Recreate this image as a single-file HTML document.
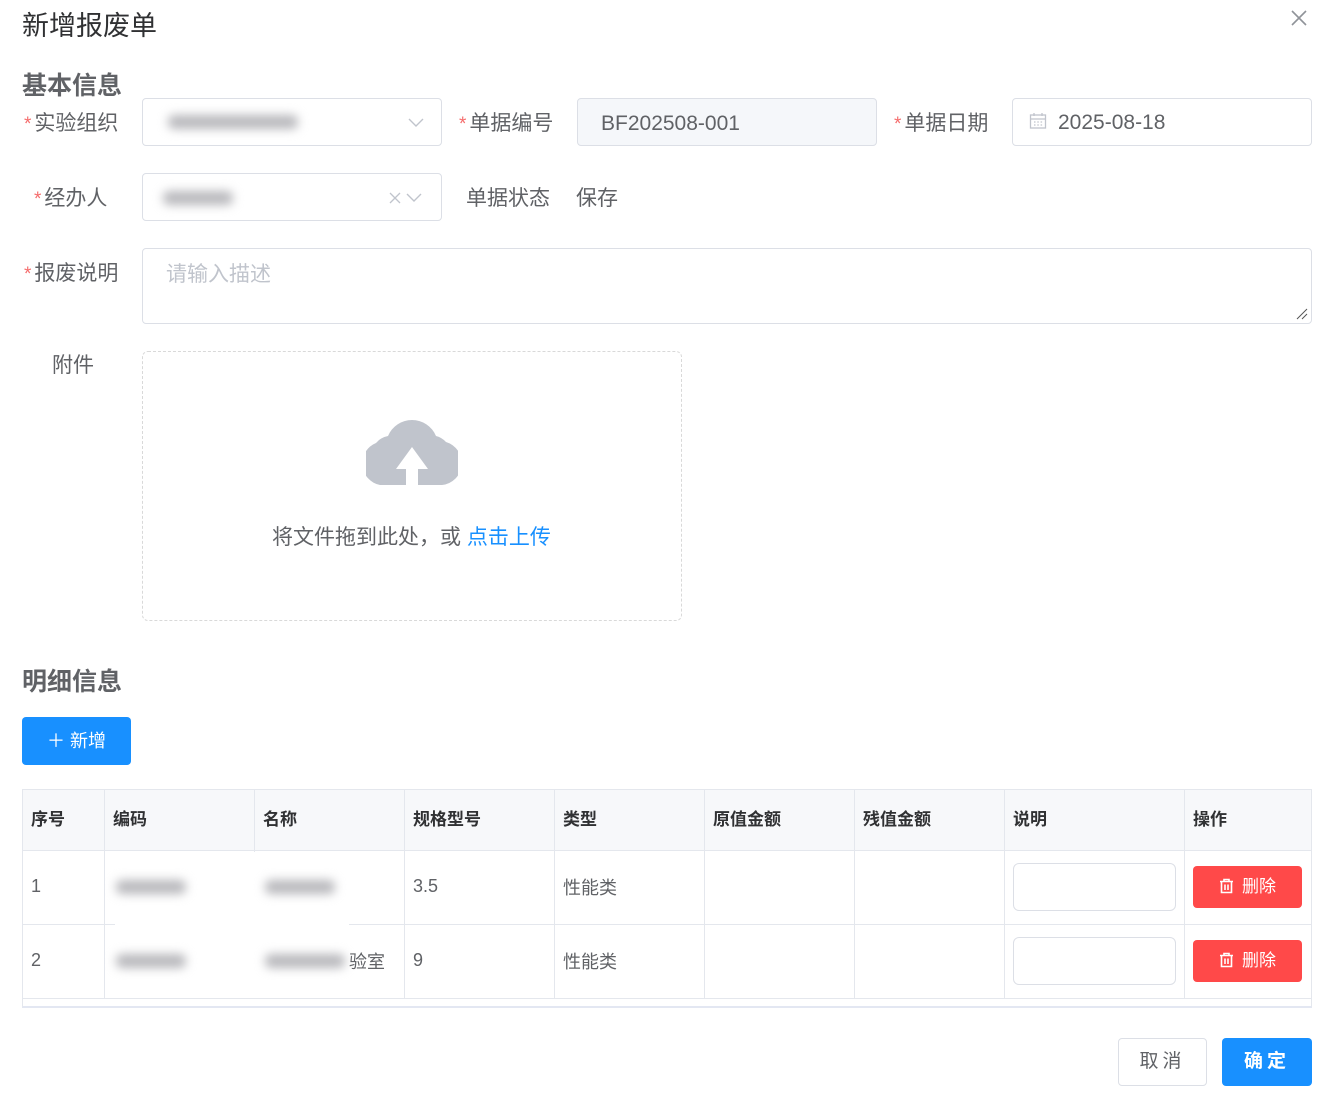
<!DOCTYPE html>
<html><head><meta charset="utf-8"><style>
*{box-sizing:border-box;margin:0;padding:0}
body{width:1330px;height:1112px;background:#fff;font-family:"Liberation Sans","Noto Sans CJK SC",sans-serif;color:#606266;position:relative;overflow:hidden}
.a{position:absolute}
.lbl{font-size:21px;color:#606266;white-space:nowrap}
.st{color:#f56c6c;font-size:19px;margin-right:3px}
.box{position:absolute;border:1px solid #dcdfe6;border-radius:4px;background:#fff}
.blur{position:absolute;background:#b8b8bc;filter:blur(5px);height:14px;border-radius:6px}
.th{position:absolute;top:0;height:60px;line-height:60px;font-weight:bold;font-size:17px;color:#303133;padding-left:8px}
.cell{position:absolute;font-size:18px;color:#606266;padding-left:8px}
.vl{position:absolute;width:1px;background:#e4e7ed}
.hl{position:absolute;height:1px;background:#e4e7ed;left:0;width:1289px}
.del{position:absolute;left:1193px;width:109px;height:42px;background:#ff4949;border-radius:4px;color:#fff;font-size:17px;line-height:42px;text-align:center}
.ip{position:absolute;left:1013px;width:163px;height:48px;border:1px solid #dcdfe6;border-radius:6px}
</style></head><body>
<div class="a" style="left:22px;top:4px;font-size:27px;color:#303133">新增报废单</div>
<svg class="a" style="left:1290px;top:9px" width="18" height="18" viewBox="0 0 18 18"><path d="M2 2L16 16M16 2L2 16" stroke="#909399" stroke-width="1.6"/></svg>
<div class="a" style="left:22px;top:66px;font-size:25px;font-weight:bold;color:#606266">基本信息</div>

<div class="a lbl" style="left:24px;top:107px"><span class="st">*</span>实验组织</div>
<div class="box" style="left:142px;top:98px;width:300px;height:48px"></div>
<div class="blur" style="left:168px;top:115px;width:130px"></div>
<svg class="a" style="left:408px;top:116px" width="16" height="12" viewBox="0 0 16 12"><path d="M1 3L8 10L15 3" fill="none" stroke="#c0c4cc" stroke-width="1.4"/></svg>

<div class="a lbl" style="left:459px;top:107px"><span class="st">*</span>单据编号</div>
<div class="box" style="left:577px;top:98px;width:300px;height:48px;background:#f5f7fa"></div>
<div class="a" style="left:601px;top:112px;font-size:21px;color:#606266">BF202508-001</div>

<div class="a lbl" style="left:894px;top:107px"><span class="st">*</span>单据日期</div>
<div class="box" style="left:1012px;top:98px;width:300px;height:48px"></div>
<svg class="a" style="left:1029px;top:112px" width="18" height="18" viewBox="0 0 18 18"><rect x="1.5" y="3" width="15" height="13" fill="none" stroke="#c0c4cc" stroke-width="1.3"/><path d="M1.5 7H16.5M5 1V4M13 1V4" stroke="#c0c4cc" stroke-width="1.3"/><path d="M5 10h1.5M8.3 10h1.5M11.6 10h1.5M5 13h1.5M8.3 13h1.5M11.6 13h1.5" stroke="#c0c4cc" stroke-width="1.2"/></svg>
<div class="a" style="left:1058px;top:111px;font-size:21px;color:#606266">2025-08-18</div>

<div class="a lbl" style="left:34px;top:182px"><span class="st">*</span>经办人</div>
<div class="box" style="left:142px;top:173px;width:300px;height:48px"></div>
<div class="blur" style="left:163px;top:191px;width:70px"></div>
<svg class="a" style="left:388px;top:191px" width="38" height="14" viewBox="0 0 38 14"><path d="M2 2L12 12M12 2L2 12" stroke="#c0c4cc" stroke-width="1.3"/><path d="M19 3L26 10L33 3" fill="none" stroke="#c0c4cc" stroke-width="1.4"/></svg>
<div class="a lbl" style="left:466px;top:182px">单据状态</div>
<div class="a lbl" style="left:576px;top:182px">保存</div>

<div class="a lbl" style="left:24px;top:257px"><span class="st">*</span>报废说明</div>
<div class="box" style="left:142px;top:248px;width:1170px;height:76px"></div>
<div class="a" style="left:166px;top:258px;font-size:21px;color:#c0c4cc">请输入描述</div>
<svg class="a" style="left:1296px;top:308px" width="12" height="12" viewBox="0 0 12 12"><path d="M1 11L11 1M6 11L11 6" stroke="#555" stroke-width="1"/></svg>

<div class="a lbl" style="left:52px;top:349px">附件</div>
<div class="a" style="left:142px;top:351px;width:540px;height:270px;border:1px dashed #d9d9d9;border-radius:6px"></div>
<svg class="a" style="left:366px;top:417px" width="92" height="70" viewBox="0 0 92 70"><path d="M14 68 A22 22 0 0 1 10 26 A20 20 0 0 1 22 19 A26 26 0 0 1 70 19 A20 20 0 0 1 80 25 A22 22 0 0 1 76 68 Z" fill="#c0c4cc"/><path d="M46 30L30 52H40V70H52V52H62Z" fill="#fff"/></svg>
<div class="a" style="left:272px;top:521px;font-size:21px;color:#606266">将文件拖到此处，或 <span style="color:#1890ff">点击上传</span></div>

<div class="a" style="left:22px;top:662px;font-size:25px;font-weight:bold;color:#606266">明细信息</div>
<div class="a" style="left:22px;top:717px;width:109px;height:48px;background:#1890ff;border-radius:4px;color:#fff;font-size:18px;line-height:48px;text-align:center">＋ 新增</div>

<div class="a" style="left:22px;top:789px;width:1290px;height:219px;border:1px solid #e4e7ed;border-bottom:2px solid #e3e7f2">
 <div class="a" style="left:0;top:0;width:1288px;height:60px;background:#f7f8fa"></div>
 <div class="th" style="left:0">序号</div><div class="th" style="left:82px">编码</div><div class="th" style="left:232px">名称</div><div class="th" style="left:382px">规格型号</div><div class="th" style="left:532px">类型</div><div class="th" style="left:682px">原值金额</div><div class="th" style="left:832px">残值金额</div><div class="th" style="left:982px">说明</div><div class="th" style="left:1162px">操作</div>
 <div class="vl" style="left:81px;top:0;height:208px"></div><div class="vl" style="left:231px;top:0;height:208px"></div><div class="vl" style="left:381px;top:0;height:208px"></div><div class="vl" style="left:531px;top:0;height:208px"></div><div class="vl" style="left:681px;top:0;height:208px"></div><div class="vl" style="left:831px;top:0;height:208px"></div><div class="vl" style="left:981px;top:0;height:208px"></div><div class="vl" style="left:1161px;top:0;height:208px"></div>
 <div class="hl" style="top:60px"></div><div class="hl" style="top:134px"></div><div class="hl" style="top:208px"></div>
 <div class="cell" style="left:0;top:86px">1</div><div class="cell" style="left:382px;top:86px">3.5</div><div class="cell" style="left:532px;top:84px">性能类</div>
 <div class="cell" style="left:0;top:160px">2</div><div class="cell" style="left:382px;top:160px">9</div><div class="cell" style="left:532px;top:158px">性能类</div>
 <div class="cell" style="left:318px;top:158px">验室</div>
 <div class="a" style="left:92px;top:62px;width:234px;height:146px;background:#fff"></div>
 <div class="blur" style="left:93px;top:90px;width:70px"></div><div class="blur" style="left:242px;top:90px;width:70px"></div>
 <div class="blur" style="left:93px;top:164px;width:70px"></div><div class="blur" style="left:242px;top:164px;width:80px"></div>
</div>
<div class="ip" style="top:863px"></div><div class="ip" style="top:937px"></div>
<div class="del" style="top:866px"><svg width="15" height="16" viewBox="0 0 15 16" style="vertical-align:-2px;margin-right:8px"><path d="M1 3.5H14M5 3.5V1.5H10V3.5M2.5 3.5V14.5H12.5V3.5M6 6.5V12M9 6.5V12" fill="none" stroke="#fff" stroke-width="1.6"/></svg>删除</div>
<div class="del" style="top:940px"><svg width="15" height="16" viewBox="0 0 15 16" style="vertical-align:-2px;margin-right:8px"><path d="M1 3.5H14M5 3.5V1.5H10V3.5M2.5 3.5V14.5H12.5V3.5M6 6.5V12M9 6.5V12" fill="none" stroke="#fff" stroke-width="1.6"/></svg>删除</div>

<div class="a" style="left:1118px;top:1038px;width:89px;height:48px;border:1px solid #dcdfe6;border-radius:4px;font-size:19px;line-height:46px;text-align:center;color:#606266;letter-spacing:4px">取消</div>
<div class="a" style="left:1222px;top:1038px;width:90px;height:48px;background:#1890ff;border-radius:4px;font-size:19px;line-height:48px;text-align:center;color:#fff;letter-spacing:4px;font-weight:bold">确定</div>
</body></html>
